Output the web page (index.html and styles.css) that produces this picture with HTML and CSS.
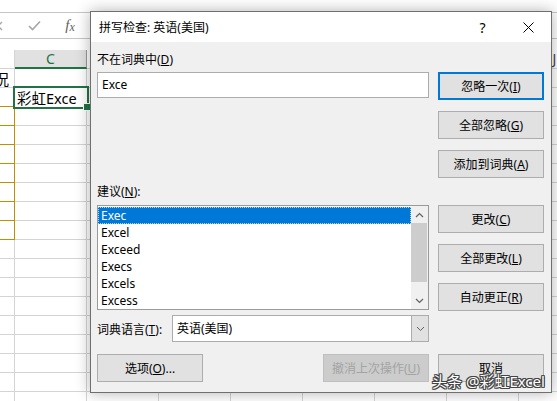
FILE: index.html
```html
<!DOCTYPE html>
<html lang="zh-CN">
<head>
  <meta charset="UTF-8">
  <meta name="viewport" content="width=device-width, initial-scale=1.0">
  <title>拼写检查</title>
  <link rel="stylesheet" href="styles.css">
</head>
<body>
  <div class="sheet">
    <div class="formula-bar">
      <span class="fb-btn">
        <svg width="10" height="10" viewBox="0 0 10 10"><path d="M1 1L9 9M9 1L1 9" stroke="#a6a6a6" stroke-width="1.4" fill="none"/></svg>
      </span>
      <span class="fb-btn">
        <svg width="13" height="11" viewBox="0 0 13 11"><path d="M1 6L4.5 9.5L12 1.5" stroke="#a6a6a6" stroke-width="1.6" fill="none"/></svg>
      </span>
      <span class="fb-btn fb-fx"><i>f</i><i class="fx-x">x</i></span>
    </div>

    <div class="col-heads">
      <div class="hd hd-b"></div>
      <div class="hd hd-active">C</div>
      <div class="hd">D</div>
      <div class="hd">E</div>
      <div class="hd">F</div>
      <div class="hd">G</div>
      <div class="hd">H</div>
      <div class="hd">I</div>
      <div class="hd">J</div>
    </div>

    <div class="rows">
      <div class="cell c-first">况</div>
      <div class="cell gold"></div>
      <div class="cell c-active">彩虹Exce</div>
    </div>
  </div>

  <div class="dialog">
    <div class="titlebar">
      <span class="title">拼写检查: 英语(美国)</span>
      <span class="tb-btn tb-help">?</span>
      <span class="tb-btn tb-close">
        <svg width="11" height="11" viewBox="0 0 11 11"><path d="M0.5 0.5L10.5 10.5M10.5 0.5L0.5 10.5" stroke="#000" stroke-width="1" fill="none"/></svg>
      </span>
    </div>

    <div class="dlg-body">
      <div class="col-main">
        <label class="lbl">不在词典中(<u>D</u>)</label>
        <div class="textbox">Exce</div>

        <label class="lbl lbl-suggest">建议(<u>N</u>):</label>
        <div class="listbox">
          <ul class="items">
            <li class="sel">Exec</li>
            <li>Excel</li>
            <li>Exceed</li>
            <li>Execs</li>
            <li>Excels</li>
            <li>Excess</li>
          </ul>
          <div class="scrollbar">
            <span class="sb-arrow">
              <svg width="9" height="6" viewBox="0 0 9 6"><path d="M1 5L4.5 1.5L8 5" stroke="#606060" stroke-width="1.2" fill="none"/></svg>
            </span>
            <span class="sb-thumb"></span>
            <span class="sb-track"></span>
            <span class="sb-arrow">
              <svg width="9" height="6" viewBox="0 0 9 6"><path d="M1 1L4.5 4.5L8 1" stroke="#606060" stroke-width="1.2" fill="none"/></svg>
            </span>
          </div>
        </div>

        <div class="lang-row">
          <label class="lang-label">词典语言(<u>T</u>):</label>
          <div class="combo">
            <span class="combo-text">英语(美国)</span>
            <span class="combo-btn">
              <svg width="9" height="6" viewBox="0 0 9 6"><path d="M1 1L4.5 4.5L8 1" stroke="#606060" stroke-width="1" fill="none"/></svg>
            </span>
          </div>
        </div>

        <div class="bottom-row">
          <button class="btn">选项(<u>O</u>)...</button>
          <button class="btn" disabled>撤消上次操作(<u>U</u>)</button>
        </div>
      </div>

      <div class="col-side">
        <button class="btn btn-default first">忽略一次(<u>I</u>)</button>
        <button class="btn gap-sm">全部忽略(<u>G</u>)</button>
        <button class="btn gap-sm">添加到词典(<u>A</u>)</button>
        <button class="btn gap-lg">更改(<u>C</u>)</button>
        <button class="btn gap-sm">全部更改(<u>L</u>)</button>
        <button class="btn gap-sm">自动更正(<u>R</u>)</button>
        <button class="btn gap-end">取消</button>
      </div>
    </div>
  </div>

  <div class="watermark">头条 @彩虹Excel</div>
</body>
</html>
```

FILE: styles.css
```css
* {
  margin: 0;
  padding: 0;
  box-sizing: border-box;
}

html,
body {
  width: 557px;
  height: 401px;
  overflow: hidden;
}

body {
  position: relative;
  font-family: "Noto Sans", "Noto Sans CJK SC", sans-serif;
  font-size: 12px;
  color: #000;
  background-color: #fff;
}

/* spreadsheet behind the dialog */
.sheet {
  width: 557px;
  height: 401px;
  padding-top: 12px;
  overflow: hidden;
}

.formula-bar {
  display: flex;
  height: 27px;
  margin-left: -20px;
  border-top: 1px solid #c6c6c6;
  border-bottom: 1px solid #c6c6c6;
}

.fb-btn {
  width: 36px;
  display: flex;
  align-items: center;
  justify-content: center;
}

.fb-fx {
  font-family: "Liberation Serif", serif;
  font-size: 15px;
  color: #5f5f5f;
}

.fx-x {
  font-size: 12px;
  margin-top: 3px;
}

.col-heads {
  display: flex;
  height: 19px;
  margin-top: 11px;
  overflow: hidden;
}

.hd {
  flex: 0 0 72px;
  border-right: 1px solid #d4d4d4;
  border-bottom: 1px solid #d4d4d4;
  text-align: center;
  line-height: 18px;
  font-size: 14px;
  color: #444;
}

.hd-b {
  flex-basis: 15px;
}

.hd-active {
  background-color: #e1e1e1;
  color: #217346;
  border-right-color: #9b9b9b;
  border-bottom: 2px solid #217346;
  line-height: 17px;
}

.rows {
  display: grid;
  grid-template-columns: 15px repeat(8, 72px);
  grid-auto-rows: 19px;
  height: 340px;
  overflow: hidden;
  background-image:
    linear-gradient(to right, transparent 71px, #d4d4d4 71px),
    linear-gradient(to bottom, transparent 18px, #d4d4d4 18px);
  background-size: 72px 100%, 100% 19px;
  background-position: 15px 0, 0 0;
}

.cell {
  font-size: 14.5px;
  white-space: nowrap;
  overflow: hidden;
}

.c-first {
  grid-column: 1;
  grid-row: 1;
  display: flex;
  justify-content: flex-end;
  align-items: center;
  padding-right: 6px;
  height: 18px;
}

.gold {
  grid-column: 1;
  grid-row: 2 / span 8;
  border-right: 1px solid #bf9000;
  background: linear-gradient(to bottom, transparent 18px, #bf9000 18px) 0 0 / 100% 19px, #fff;
}

.c-active {
  grid-column: 2;
  grid-row: 2;
  position: relative;
  overflow: visible;
  display: flex;
  align-items: center;
  padding-left: 2px;
  background-color: #fff;
  outline: 2px solid #217346;
  z-index: 1;
}

.c-active::after {
  content: "";
  position: absolute;
  right: -4px;
  bottom: -4px;
  width: 6px;
  height: 6px;
  background-color: #217346;
  border: 1px solid #fff;
}

/* spell check dialog */
.dialog {
  position: absolute;
  left: 90px;
  top: 11px;
  width: 462px;
  height: 382px;
  display: flex;
  flex-direction: column;
  background-color: #f0f0f0;
  border: 1px solid #6f6f6f;
  box-shadow: 0 0 14px rgba(0, 0, 0, 0.3);
  z-index: 2;
}

.titlebar {
  height: 30px;
  display: flex;
  align-items: center;
  background-color: #fff;
}

.title {
  flex: 1;
  padding-left: 8px;
}

.tb-btn {
  height: 30px;
  display: flex;
  align-items: center;
  justify-content: center;
}

.tb-help {
  width: 45px;
  font-size: 14px;
}

.tb-close {
  width: 46px;
}

.dlg-body {
  flex: 1;
  display: flex;
  gap: 9px;
  padding: 8px 7px 10px 6px;
}

.col-main {
  width: 332px;
  display: flex;
  flex-direction: column;
}

.col-side {
  width: 106px;
  display: flex;
  flex-direction: column;
}

.lbl {
  height: 20px;
  line-height: 20px;
}

.textbox {
  margin-top: 2px;
  height: 26px;
  line-height: 24px;
  padding-left: 4px;
  background-color: #fff;
  border: 1px solid #acacac;
}

.lbl-suggest {
  margin-top: 84px;
}

.listbox {
  margin-top: 3px;
  height: 105px;
  display: flex;
  background-color: #fff;
  border: 1px solid #9a9a9a;
}

.items {
  flex: 1;
  list-style: none;
  padding-top: 1px;
}

.items li {
  height: 17px;
  line-height: 17px;
  padding-left: 3px;
}

.items li.sel {
  background-color: #0078d7;
  color: #fff;
  outline: 1px dotted #b5d6f3;
  outline-offset: -1px;
}

.scrollbar {
  width: 17px;
  display: flex;
  flex-direction: column;
  background-color: #f0f0f0;
}

.sb-arrow {
  height: 17px;
  display: flex;
  align-items: center;
  justify-content: center;
}

.sb-thumb {
  height: 59px;
  margin-right: 1px;
  background-color: #cdcdcd;
}

.sb-track {
  flex: 1;
}

.lang-row {
  margin-top: 5px;
  height: 27px;
  display: flex;
  align-items: center;
}

.lang-label {
  flex: 1;
}

.combo {
  width: 257px;
  height: 27px;
  display: flex;
  background-color: #fff;
  border: 1px solid #acacac;
}

.combo-text {
  flex: 1;
  padding-left: 4px;
  line-height: 25px;
}

.combo-btn {
  width: 17px;
  display: flex;
  align-items: center;
  justify-content: center;
  background-color: #e1e1e1;
  border-left: 1px solid #acacac;
}

.bottom-row {
  margin-top: 12px;
  display: flex;
  justify-content: space-between;
}

.btn {
  width: 106px;
  height: 28px;
  display: flex;
  align-items: center;
  justify-content: center;
  font-family: inherit;
  font-size: 12px;
  color: #000;
  background-color: #e1e1e1;
  border: 1px solid #adadad;
}

.btn:disabled {
  color: #a3a3a3;
  background-color: #cccccc;
  border-color: #bfbfbf;
}

.btn-default {
  border: 2px solid #0078d7;
}

.first {
  margin-top: 22px;
}

.gap-sm {
  margin-top: 11px;
}

.gap-lg {
  margin-top: 27px;
}

.gap-end {
  margin-top: auto;
}

/* watermark over the screenshot */
.watermark {
  position: absolute;
  left: 432px;
  top: 371px;
  font-size: 15px;
  line-height: 20px;
  color: #fff;
  text-shadow:
    1px 0 0 #444, -1px 0 0 #444, 0 1px 0 #444, 0 -1px 0 #444,
    1px 1px 0 #444, -1px -1px 0 #444, 1px -1px 0 #444, -1px 1px 0 #444;
  z-index: 3;
}
```
